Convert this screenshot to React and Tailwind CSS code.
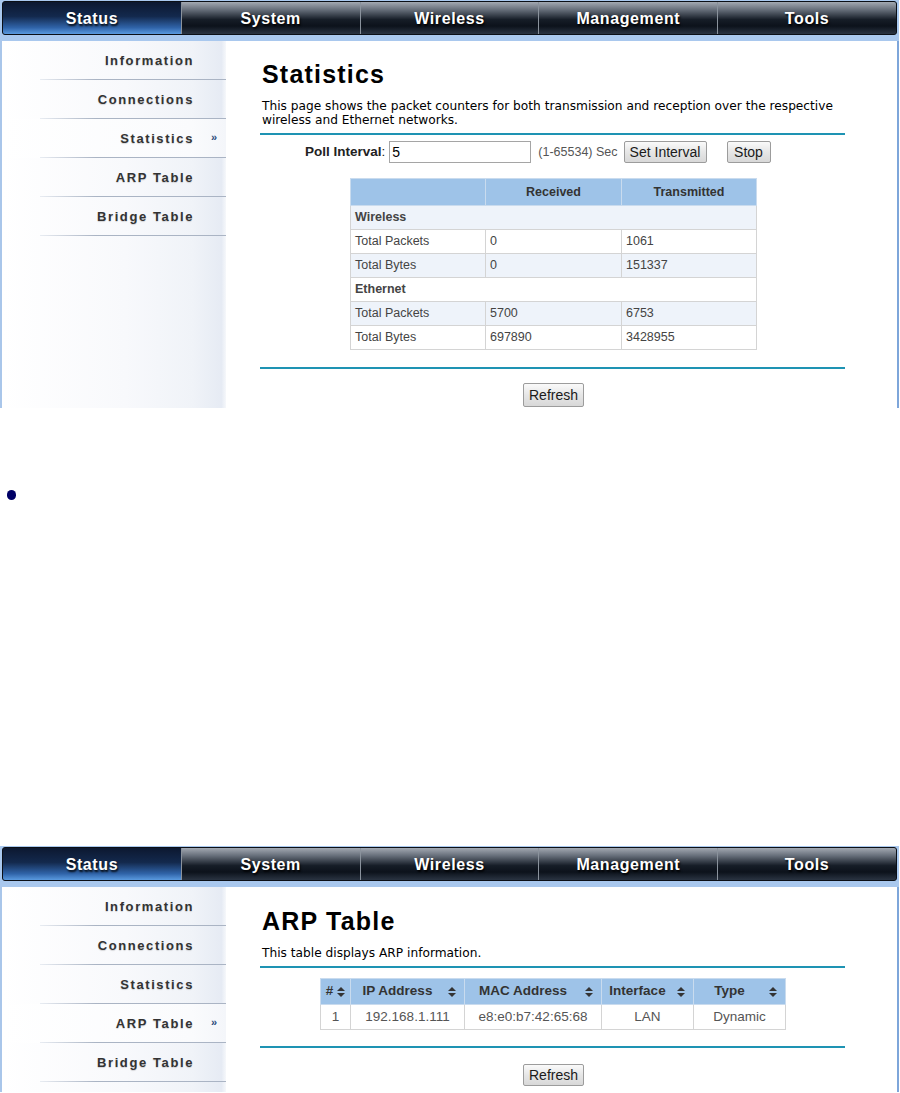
import React from 'react';

const tabs = ['Status', 'System', 'Wireless', 'Management', 'Tools'];
const menu = ['Information', 'Connections', 'Statistics', 'ARP Table', 'Bridge Table'];

function NavBar() {
    return (
        <div className="h-[34px] mx-[2px] flex rounded-[3px] border border-[#0b0f16] overflow-hidden bg-[#111820]">
            {tabs.map((t, i) => (
                <div
                    key={t}
                    className={`flex-1 flex items-center justify-center pt-px text-white font-bold text-[16px] tracking-[0.6px] [text-shadow:1px_2px_2px_rgba(0,0,0,0.9)] ${
                        i === 0
                            ? 'bg-[linear-gradient(to_bottom,#0c1830_0%,#13294d_45%,#2f63a8_80%,#5a9ae0_100%)]'
                            : 'bg-[linear-gradient(to_bottom,#a3a9b2_0%,#646c78_25%,#161d27_55%,#0c121b_75%,#2a3442_100%)] border-l border-[#8a929c]'
                    }`}
                >
                    {t}
                </div>
            ))}
        </div>
    );
}

function Sidebar({ active }) {
    return (
        <div className="w-[226px] shrink-0 bg-[linear-gradient(to_right,#ffffff_0%,#f8f9fc_55%,#f0f3f8_85%,#e6ebf4_98%,#f6f8fb_100%)] border-l-2 border-[#a9c6ea]">
            {menu.map((m) => (
                <div
                    key={m}
                    className={`relative h-[39px] flex items-center justify-end pr-[32px] ${
                        m === active ? 'bg-[linear-gradient(to_right,#ffffff,#fafbfd_85%,#f4f6fa)]' : ''
                    }`}
                >
                    <span className="font-bold text-[13px] tracking-[1.6px] text-[#333] [text-shadow:0_1px_1px_rgba(0,0,0,0.15)]">
                        {m}
                    </span>
                    {m === active && (
                        <span className="absolute right-[9px] top-[13px] text-[11px] font-bold text-[#2a4a7a] leading-none">»</span>
                    )}
                    <div className="absolute left-[38px] right-0 bottom-0 h-px bg-[linear-gradient(to_right,#e8ecf2,#aab4c4_30%,#aab4c4)]" />
                </div>
            ))}
        </div>
    );
}

function Btn({ children, className = '' }) {
    return (
        <button className={`h-[22px] px-[4px] whitespace-nowrap border border-[#9c9c9c] rounded-[2px] bg-[linear-gradient(to_bottom,#fafafa,#e6e6e6_50%,#d8d8d8)] text-[14px] text-[#1a1a1a] leading-none ${className}`}>
            {children}
        </button>
    );
}

function SortIcon() {
    return (
        <svg width="8" height="10" viewBox="0 0 8 10" className="inline-block">
            <path d="M4 0 L8 4 L0 4 Z M0 6 L8 6 L4 10 Z" fill="#333" />
        </svg>
    );
}

function Frame({ active, bodyHeight, children }) {
    return (
        <div className="w-[899px] bg-[#a9c8ee] pt-px">
            <NavBar />
            <div className="h-[6px]" />
            <div className="flex" style={{ height: bodyHeight }}>
                <Sidebar active={active} />
                <div className="flex-1 bg-white border-r-2 border-[#7ea6da] pl-[36px] pr-[52px]">{children}</div>
            </div>
        </div>
    );
}

function StatsPage() {
    const rows = [
        { section: 'Wireless' },
        { label: 'Total Packets', rx: '0', tx: '1061' },
        { label: 'Total Bytes', rx: '0', tx: '151337' },
        { section: 'Ethernet' },
        { label: 'Total Packets', rx: '5700', tx: '6753' },
        { label: 'Total Bytes', rx: '697890', tx: '3428955' },
    ];
    return (
        <Frame active="Statistics" bodyHeight={367}>
            <h1 className="mt-[19px] text-[25px] leading-[28px] font-bold text-black tracking-[1.2px]">Statistics</h1>
            <p className="mt-[11px] text-[12.2px] leading-[14px] text-black font-['DejaVu_Sans',sans-serif]">
                This page shows the packet counters for both transmission and reception over the respective wireless and Ethernet networks.
            </p>
            <div className="mt-[6px] -ml-[2px] h-[2px] bg-[#1e93b3]" />
            <div className="mt-[5px] flex items-center h-[24px] pl-[43px] text-[13.5px]">
                <span className="font-bold text-[#222]">Poll Interval</span>
                <span className="text-[#222]">:</span>
                <input
                    readOnly
                    value="5"
                    className="ml-[4px] w-[142px] h-[22px] border border-[#a5a5a5] px-[2px] text-[14px] text-black outline-none"
                />
                <span className="ml-[7px] text-[#555] text-[12.5px]">(1-65534) Sec</span>
                <Btn className="ml-[6px] w-[83px]">Set Interval</Btn>
                <Btn className="ml-[20px] w-[44px]">Stop</Btn>
            </div>
            <table className="mt-[14px] ml-[88px] w-[407px] border-collapse text-[12.5px] text-[#444]">
                <thead>
                    <tr className="h-[27px] bg-[#9ec3e8]">
                        <th className="w-[135px] border border-[#c9dbee]"></th>
                        <th className="w-[136px] border border-[#c9dbee] font-bold text-[#333]">Received</th>
                        <th className="border border-[#c9dbee] font-bold text-[#333]">Transmitted</th>
                    </tr>
                </thead>
                <tbody>
                    {rows.map((r, i) =>
                        r.section ? (
                            <tr key={i} className={`h-[24px] ${i === 0 ? 'bg-[#eef3fa]' : 'bg-white'}`}>
                                <td colSpan={3} className="px-[4px] border border-[#d4d4d4] font-bold">{r.section}</td>
                            </tr>
                        ) : (
                            <tr key={i} className={`h-[24px] ${i % 2 === 0 ? 'bg-[#eef3fa]' : 'bg-white'}`}>
                                <td className="px-[4px] border border-[#d4d4d4]">{r.label}</td>
                                <td className="px-[4px] border border-[#d4d4d4]">{r.rx}</td>
                                <td className="px-[4px] border border-[#d4d4d4]">{r.tx}</td>
                            </tr>
                        )
                    )}
                </tbody>
            </table>
            <div className="mt-[17px] -ml-[2px] h-[2px] bg-[#1e93b3]" />
            <div className="mt-[14px] flex justify-center">
                <Btn className="h-[24px] w-[61px]">Refresh</Btn>
            </div>
        </Frame>
    );
}

function ArpPage() {
    const cols = [
        { name: '#', w: 'w-[30px]' },
        { name: 'IP Address', w: 'w-[114px]' },
        { name: 'MAC Address', w: 'w-[137px]' },
        { name: 'Interface', w: 'w-[92px]' },
        { name: 'Type', w: 'w-[92px]' },
    ];
    const row = ['1', '192.168.1.111', 'e8:e0:b7:42:65:68', 'LAN', 'Dynamic'];
    return (
        <Frame active="ARP Table" bodyHeight={205}>
            <h1 className="mt-[20px] text-[25px] leading-[28px] font-bold text-black tracking-[1.2px]">ARP Table</h1>
            <p className="mt-[11px] text-[12.2px] leading-[14px] text-black font-['DejaVu_Sans',sans-serif]">
                This table displays ARP information.
            </p>
            <div className="mt-[6px] -ml-[2px] h-[2px] bg-[#1e93b3]" />
            <table className="mt-[10px] ml-[58px] border-collapse text-[13.5px]">
                <thead>
                    <tr className="h-[26px] bg-[#9ec3e8]">
                        {cols.map((c) => (
                            <th key={c.name} className={`${c.w} border border-[#c9dbee] font-bold text-[#333]`}>
                                <div className="flex items-center justify-center gap-[4px]">
                                    <span className={c.name === '#' ? '' : 'flex-1 text-center'}>{c.name}</span>
                                    <span className={c.name === '#' ? '' : 'pr-[8px]'}>
                                        <SortIcon />
                                    </span>
                                </div>
                            </th>
                        ))}
                    </tr>
                </thead>
                <tbody>
                    <tr className="h-[25px] bg-white">
                        {row.map((v, i) => (
                            <td key={i} className="border border-[#d4d4d4] text-center text-[#555]">{v}</td>
                        ))}
                    </tr>
                </tbody>
            </table>
            <div className="mt-[16px] -ml-[2px] h-[2px] bg-[#1e93b3]" />
            <div className="mt-[16px] flex justify-center">
                <Btn className="h-[22px] w-[61px]">Refresh</Btn>
            </div>
        </Frame>
    );
}

export default function App() {
    return (
        <div className="w-[900px] bg-white font-['Liberation_Sans',Arial,sans-serif]">
            <StatsPage />
            <div className="h-[438px] relative">
                <div className="absolute left-[7px] top-[82px] w-[9px] h-[10px] rounded-full bg-[#000066]" />
            </div>
            <ArpPage />
        </div>
    );
}
